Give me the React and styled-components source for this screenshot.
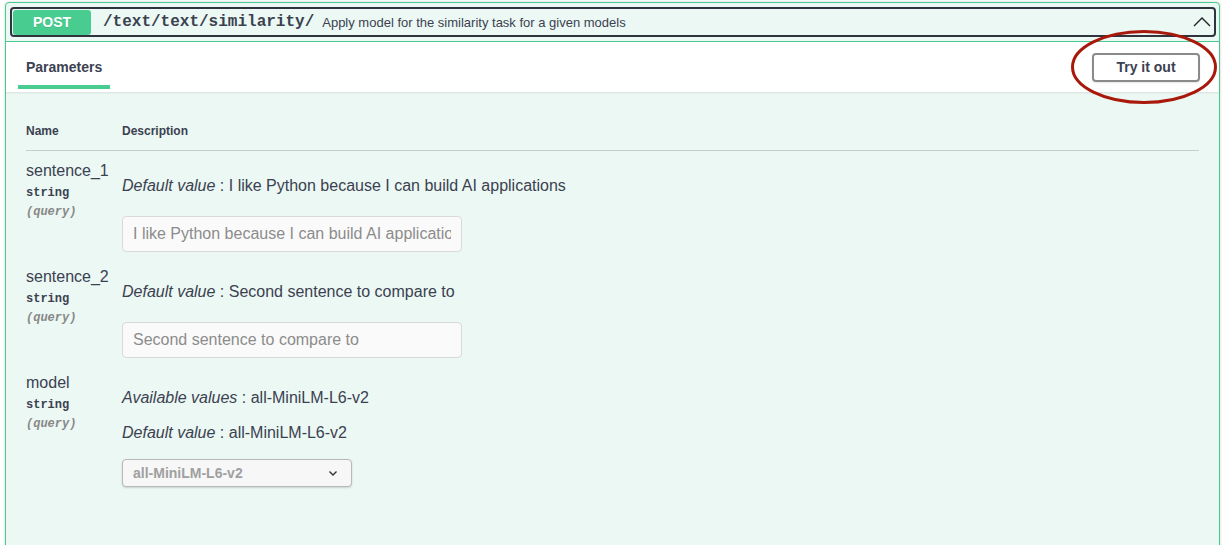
import React from "react";
import styled, { createGlobalStyle } from "styled-components";

const GlobalStyle = createGlobalStyle`
  body {
    margin: 0;
    background: #ffffff;
    font-family: "Liberation Sans", Arial, sans-serif;
    color: #3b4151;
  }
`;

const Page = styled.div`
  padding: 2px 5px 0 5px;
`;

const Opblock = styled.div`
  position: relative;
  border: 1px solid #49cc90;
  border-radius: 4px;
  background: #ecf8f3;
  box-shadow: 0 0 3px rgba(0, 0, 0, 0.19);
`;

const Summary = styled.div`
  padding: 4px 3px 4px 4px;
  border-bottom: 1px solid #49cc90;
`;

const SummaryInner = styled.div`
  display: flex;
  align-items: center;
  height: 26px;
  padding: 0 1px;
  border: 2px solid #30353d;
  border-radius: 4px;
`;

const Method = styled.span`
  display: flex;
  align-items: center;
  justify-content: center;
  width: 78px;
  height: 25px;
  background: #49cc90;
  color: #ffffff;
  border-radius: 3px;
  font-size: 14px;
  font-weight: 700;
  text-shadow: 0 1px 0 rgba(0, 0, 0, 0.1);
`;

const Path = styled.span`
  margin-left: 12px;
  font-family: "Liberation Mono", "Courier New", monospace;
  font-size: 16px;
  font-weight: 700;
  color: #3b4151;
`;

const SummaryDesc = styled.span`
  flex: 1;
  margin-left: 8px;
  font-size: 13px;
  color: #3b4151;
`;

const Arrow = styled.svg`
  width: 20px;
  height: 20px;
  margin-right: 1px;
`;

const SectionHeader = styled.div`
  display: flex;
  align-items: center;
  justify-content: space-between;
  min-height: 50px;
  padding: 0 20px;
  background: #ffffff;
  box-shadow: 0 1px 2px rgba(0, 0, 0, 0.1);
`;

const Tab = styled.h4`
  position: relative;
  margin: 0;
  font-size: 14px;
  font-weight: 700;
  color: #3b4151;
  line-height: 50px;
  &::after {
    content: "";
    position: absolute;
    left: -8px;
    right: -8px;
    bottom: 3px;
    height: 4px;
    background: #49cc90;
  }
`;

const TryButton = styled.button`
  margin-right: -1px;
  width: 108px;
  height: 29px;
  border: 2px solid #8a8a8a;
  border-radius: 4px;
  background: transparent;
  box-shadow: 0 1px 2px rgba(0, 0, 0, 0.1);
  font-family: "Liberation Sans", Arial, sans-serif;
  font-size: 14px;
  font-weight: 700;
  color: #3b4151;
`;

const Highlight = styled.svg`
  position: absolute;
  left: 1064px;
  top: 26px;
  width: 148px;
  height: 76px;
  pointer-events: none;
`;

const TableWrap = styled.div`
  padding: 20px 20px 60px 20px;
`;

const HeadRow = styled.div`
  display: grid;
  grid-template-columns: 96px 1fr;
  padding: 12px 0;
  border-bottom: 1px solid #c6cdcf;
  font-size: 12px;
  font-weight: 700;
  line-height: 14px;
`;

const Row = styled.div`
  display: grid;
  grid-template-columns: 96px 1fr;
  padding: 10px 0 5px 0;
`;

const NameCol = styled.div`
  display: flex;
  flex-direction: column;
`;

const ParamName = styled.div`
  font-size: 16px;
  line-height: 19px;
`;

const ParamType = styled.div`
  margin-top: 6px;
  font-family: "Liberation Mono", "Courier New", monospace;
  font-size: 12px;
  font-weight: 700;
  line-height: 14px;
`;

const ParamIn = styled.div`
  margin-top: 5px;
  font-family: "Liberation Mono", "Courier New", monospace;
  font-size: 12px;
  font-style: italic;
  font-weight: 700;
  line-height: 14px;
  color: #888888;
`;

const DescCol = styled.div`
  display: flex;
  flex-direction: column;
  align-items: flex-start;
`;

const Para = styled.p`
  margin: ${(p) => (p.$first ? "15px" : "16px")} 0 0 0;
  font-size: 16px;
  line-height: 19px;
  color: #3b4151;
  i {
    font-style: italic;
  }
`;

const TextInput = styled.input`
  box-sizing: border-box;
  margin-top: 21px;
  width: 340px;
  height: 36px;
  padding: 0 10px;
  border: 1px solid #d9d9d9;
  border-radius: 4px;
  background: #fafafa;
  font-family: "Liberation Sans", Arial, sans-serif;
  font-size: 16px;
  color: #3b4151;
  &::placeholder {
    color: #8c8c8c;
  }
`;

const Select = styled.div`
  box-sizing: border-box;
  display: flex;
  align-items: center;
  justify-content: space-between;
  margin-top: 17px;
  width: 230px;
  height: 28px;
  padding: 0 13px 0 10px;
  border: 1px solid #b8b8b8;
  border-radius: 4px;
  background: #f7f7f7;
  box-shadow: 0 1px 2px rgba(0, 0, 0, 0.15);
  font-size: 14px;
  font-weight: 700;
  color: #a0a0a0;
`;

const params = [
  {
    name: "sentence_1",
    lines: [{ label: "Default value", value: "I like Python because I can build AI applications" }],
    input: "I like Python because I can build AI applications",
  },
  {
    name: "sentence_2",
    lines: [{ label: "Default value", value: "Second sentence to compare to" }],
    input: "Second sentence to compare to",
  },
  {
    name: "model",
    lines: [
      { label: "Available values", value: "all-MiniLM-L6-v2" },
      { label: "Default value", value: "all-MiniLM-L6-v2" },
    ],
    select: "all-MiniLM-L6-v2",
  },
];

export default function App() {
  return (
    <Page>
      <GlobalStyle />
      <Opblock>
        <Summary>
          <SummaryInner>
            <Method>POST</Method>
            <Path>/text/text/similarity/</Path>
            <SummaryDesc>Apply model for the similarity task for a given models</SummaryDesc>
            <Arrow viewBox="0 0 20 20">
              <polyline points="2,14 10,6 18,14" fill="none" stroke="#222" strokeWidth="1.4" />
            </Arrow>
          </SummaryInner>
        </Summary>
        <SectionHeader>
          <Tab>Parameters</Tab>
          <TryButton>Try it out</TryButton>
        </SectionHeader>
        <Highlight viewBox="0 0 148 76">
          <ellipse cx="74" cy="38" rx="71.5" ry="35.5" fill="none" stroke="#a8190b" strokeWidth="3" />
        </Highlight>
        <TableWrap>
          <HeadRow>
            <div>Name</div>
            <div>Description</div>
          </HeadRow>
          {params.map((p) => (
            <Row key={p.name}>
              <NameCol>
                <ParamName>{p.name}</ParamName>
                <ParamType>string</ParamType>
                <ParamIn>(query)</ParamIn>
              </NameCol>
              <DescCol>
                {p.lines.map((l, i) => (
                  <Para key={l.label} $first={i === 0}>
                    <i>{l.label}</i> : {l.value}
                  </Para>
                ))}
                {p.input && <TextInput placeholder={p.input} />}
                {p.select && (
                  <Select>
                    <span>{p.select}</span>
                    <svg width="10" height="7" viewBox="0 0 10 7">
                      <polyline points="1.5,1.5 5,5 8.5,1.5" fill="none" stroke="#333" strokeWidth="1.4" />
                    </svg>
                  </Select>
                )}
              </DescCol>
            </Row>
          ))}
        </TableWrap>
      </Opblock>
    </Page>
  );
}
